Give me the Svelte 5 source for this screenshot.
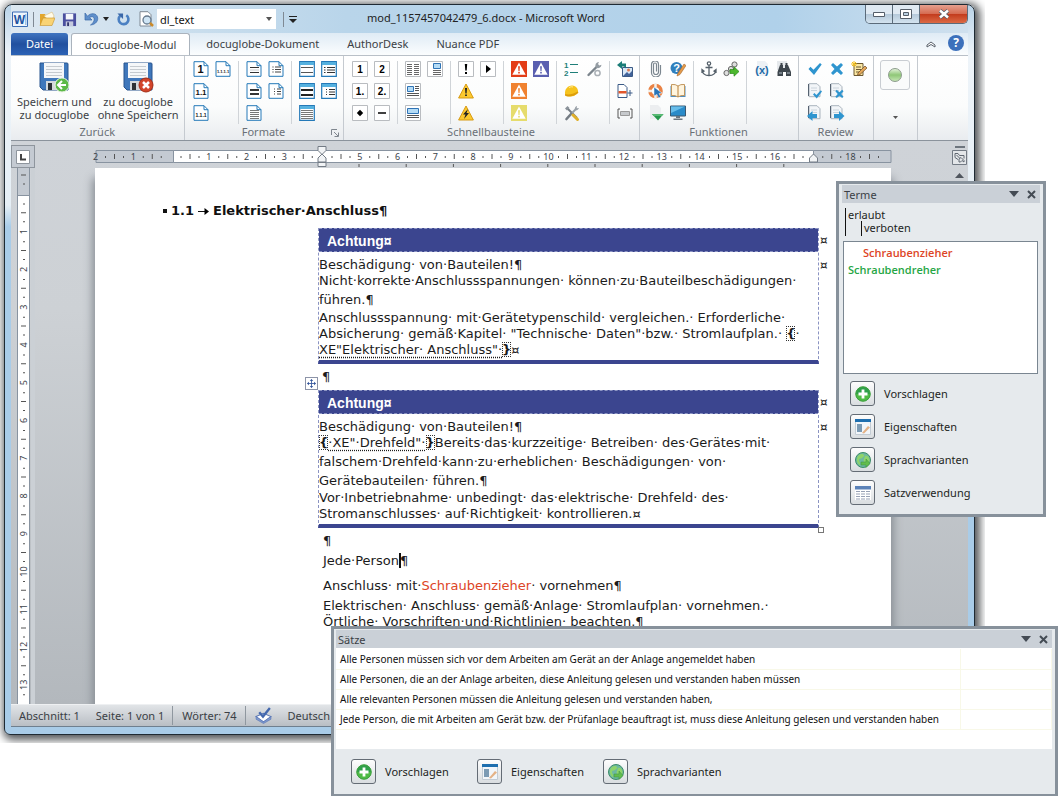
<script lang="ts">
    type Action = { icon: string; label: string };
    type Group = { name: string; blocks: string[][] };

    const numDoc = (text: string, x: number, size: number) =>
        `<path d="M1 .7h10l4 4v10.6H1z" fill="#fff" stroke="#2479b8"/><path d="M11 .7v4h4" fill="none" stroke="#2479b8"/><text x="${x}" y="12" font-size="${size}" font-weight="700" fill="#111" text-anchor="middle">${text}</text>`;
    const page = (body: string) =>
        `<path d="M1 .7h10l4 4v10.6H1z" fill="#fff" stroke="#2479b8"/><path d="M11 .7v4h4" fill="none" stroke="#2479b8"/>${body}`;
    const table = (body: string) =>
        `<path d="M.7.7h14.6v14.6H.7z" fill="#fff" stroke="#2479b8" stroke-width="1.2"/><path d="M1 1h14v3H1z" fill="#55b1df"/>${body}`;
    const box = (body: string) =>
        `<path d="M.5.5h15v15H.5z" fill="#fff" stroke="#b9bcc0"/>${body}`;
    const warn = (color: string) =>
        `<path d="M0 0h16v16H0z" fill="${color}"/><path d="M8 1.5l6.7 12.3H1.3z" fill="#fff"/><path d="M7.1 5.2h1.8l-.4 5h-1zM7.2 11h1.6v1.6H7.2z" fill="${color}"/>`;
    const triangle = (body: string) =>
        `<path d="M8 1l7.4 14H.6z" fill="#fcc92e" stroke="#d79a13" stroke-linejoin="round"/>${body}`;
    const sheet = '<path d="M2 .7h8l3 3v10H2z" fill="#f2f5f8" stroke="#a9b3bd"/><path d="M1.5 1v12" stroke="#566270"/><path d="M4 5h6M4 7.5h6" stroke="#cbd4dc"/>';
    const dots = '<path d="M4.5 6h1M4.5 8.5h1M4.5 11h1" stroke="#222"/><path d="M7 6h6M7 8.5h6M7 11h6" stroke="#444"/>';
    const check = 'M1.5 8l2-2.2 3 3L13 2l1.7 1.5L7 14z';
    const cross = 'M2 4l2-2 4 3.5L12 2l2 2-3.5 4 3.5 4-2 2-4-3.5L4 14l-2-2 3.5-4z';
    const spanner = '<path d="M2.5 14L11 5.5" stroke="#7c858d" stroke-width="2.4" stroke-linecap="round"/><path d="M10 6.5a3.5 3.5 0 0 1 3-5.5l-1 2 1.3 1.5 2.2-.8A3.5 3.5 0 0 1 10 6.5" fill="#959da4"/>';

    const icons: Record<string, string> = {
        h1: numDoc('1', 7.5, 11),
        h11: numDoc('1.1', 8, 8),
        h111: numDoc('1.1.1', 8, 5),
        h1111: numDoc('1.1.1.1', 8, 4),
        lines: page('<path d="M4 6.5h9M4 11.5h9" stroke="#333"/><path d="M4 9h9" stroke="#c7c9cc"/>'),
        bullets: page(dots),
        heavy: page('<path d="M4 7h9M4 11h9" stroke="#333" stroke-width="2"/>'),
        sub: page('<path d="M6 6h1M6 8.5h1M6 11h1M9 6h4M9 8.5h4M9 11h4" stroke="#444"/>'),
        para: page('<path d="M4 5.5h9M4 7.5h9M4 9.5h9M4 11.5h9M4 13.5h9" stroke="#777"/>'),
        tLines: table('<path d="M2 6.5h12M2 11.5h12" stroke="#555"/>'),
        tBullets: table('<path d="M3 6.5h1.5M3 9h1.5M3 11.5h1.5M6 6.5h8M6 9h8M6 11.5h8" stroke="#333"/>'),
        tHeavy: table('<path d="M2 7h12M2 12h12" stroke="#222" stroke-width="2"/>'),
        tSub: table('<path d="M5 6.5h1M5 9h1M5 11.5h1M8 6.5h6M8 9h6M8 11.5h6" stroke="#333"/>'),
        tPara: table('<path d="M2 5.5h12M2 7.5h12M2 9.5h12M2 11.5h12M2 13.5h12" stroke="#777"/>'),
        n1: box('<text x="8" y="11.5" font-size="10" font-weight="700" text-anchor="middle">1</text>'),
        n2: box('<text x="8" y="11.5" font-size="10" font-weight="700" text-anchor="middle">2</text>'),
        n1p: box('<text x="8" y="11.5" font-size="10" font-weight="700" text-anchor="middle">1.</text>'),
        n2p: box('<text x="8" y="11.5" font-size="10" font-weight="700" text-anchor="middle">2.</text>'),
        bullet: box('<path d="M8 4.8L11.2 8 8 11.2 4.8 8z"/>'),
        dash: box('<path d="M4 8h8" stroke="#111" stroke-width="1.6"/>'),
        columns: box('<path d="M2 3.5h5M2 5.5h5M2 7.5h5M2 9.5h5M2 11.5h5M2 13.5h5M9 3.5h5M9 5.5h5M9 7.5h5M9 9.5h5M9 11.5h5M9 13.5h5" stroke="#666"/>'),
        picRight: box('<path d="M6.5 2.5h7v5h-7z" fill="#b5dcf6" stroke="#2f73b5"/><path d="M6 9.5h8M6 11.5h8M6 13.5h8" stroke="#666"/>'),
        picLeft: box('<path d="M2.5 3.5h6v5h-6z" fill="#b5dcf6" stroke="#2f73b5"/><path d="M10 3.5h4M10 5.5h4M10 7.5h4M2 10.5h12M2 12.5h12" stroke="#555"/>'),
        picWide: box('<path d="M2.5 3.5h11v5h-11z" fill="#b5dcf6" stroke="#2f73b5"/><path d="M2 10.5h12M2 12.5h12" stroke="#555"/>'),
        exclaim: box('<path d="M6.8 3h2.4L8.7 9.5H7.3zM7 11h2v2H7z"/>'),
        play: box('<path d="M6 4l5 4-5 4z"/>'),
        caution: triangle('<path d="M7 5h2l-.4 5.5H7.4zM7.1 11.5h1.8V13H7.1z" fill="#222"/>'),
        voltage: triangle('<path d="M10 4L5 9.5h2.5L6 14l5-6H8.5z" fill="#222"/>'),
        red: warn('#e33d17'),
        blue: warn('#5a5fb0'),
        orange: warn('#f08230'),
        yellow: warn('#e6dc6c'),
        steps: '<path d="M6 3.5h8M6 11.5h8" stroke="#1f7f79" stroke-width="1.2"/><text x="0" y="7" font-size="8" font-weight="700" fill="#1f7f79">1</text><text x="0" y="15" font-size="8" font-weight="700" fill="#1f7f79">2</text>',
        wrench: spanner + '<circle cx="11.5" cy="12" r="2.6" fill="none" stroke="#aab0b6" stroke-width="1.5"/>',
        helmet: '<path d="M1 11C.5 6 4 2.5 8 2.5c4.5 0 6.5 4 6 7.5l-4 3c-4 1-8 .5-9-2z" fill="#f6c31d"/><path d="M1 11c3 1 8 .5 12.5-2.5l1 1C11 13 4 15 1 12.5z" fill="#dd9e0a"/><path d="M5 5c1-1.2 2.5-1.5 4-1" stroke="#ffeb9c" fill="none"/>',
        tools: '<path d="M3 3l10 10" stroke="#747c83" stroke-width="2"/><path d="M1 3.5L3.5 1l2 2L3 5.5z" fill="#8b939a"/><path d="M7.5 8.5L2.5 14" stroke="#747c83" stroke-width="2.6" stroke-linecap="round"/><path d="M8 8l4-4" stroke="#9aa2a9" stroke-width="2"/><path d="M11 5a3 3 0 0 1 2-4l-.3 2.3L15 3a3 3 0 0 1-4 2" fill="#9aa2a9"/><path d="M9 10l4.5 4.5" stroke="#e0b02a" stroke-width="3" stroke-linecap="round"/>',
        picBack: '<path d="M5.5 6.5h10v9h-10z" fill="#d9e8f6" stroke="#3b5a86"/><path d="M6 15l4-4 2 2 3-3v5z" fill="#42639a"/><circle cx="11.5" cy="9" r="1.5" fill="#e17a52"/><path d="M0 4l5-4v2.5h4v5L7 5.5H5V8z" fill="#1b7c77"/>',
        docPlus: '<path d="M1 1.5h6l3 3v10H1z" fill="#fff" stroke="#3b5a86"/><path d="M1.5 8h8v2.5h-8z" fill="#e2572b"/><path d="M13 7v6M10.5 10h5" stroke="#3b5a86"/>',
        bracket: '<path d="M3 4H1v9h2M13 4h2v9h-2" stroke="#555" fill="none"/><path d="M3.5 6.5h9v4h-9z" fill="#c6c9cc" stroke="#999"/>',
        clip: '<path d="M10.5 4v7.5a2.5 2.5 0 0 1-5 0V4a1.5 1.5 0 0 1 3 0v7M12.5 4.5V12a4.5 4.5 0 0 1-9 0V4a3.5 3.5 0 0 1 7 0" transform="translate(0 -.5)" fill="none" stroke="#7c8790" stroke-width="1.2"/>',
        helpEdit: '<circle cx="6.5" cy="7" r="6" fill="#2f7fbd"/><text x="6.5" y="11" font-size="11" font-weight="700" fill="#fff" text-anchor="middle">?</text><path d="M7 15l1-3 6-9 2 1.5-6 9z" fill="#e49b4b" stroke="#a4642a" stroke-width=".6"/>',
        ring: '<circle cx="7.5" cy="8" r="5.5" fill="none" stroke="#e98244" stroke-width="3.6"/><path d="M7.5 .5v4M7.5 11.5v4M0 8h4" stroke="#f4efe9" stroke-width="2.5"/><path d="M6 4l8 6-3 .5 2 3.5-2.5 1L9 11.5 6 13z" fill="#2875b8" stroke="#fff" stroke-width=".5"/>',
        book: '<path d="M.5 3h15v11H.5z" fill="#4f8fc2"/><path d="M1.5 1.5q4-.5 6.5 1.5 2.5-2 6.5-1.5v11q-4-.5-6.5 1.5-2.5-2-6.5-1.5z" fill="#fff5df" stroke="#c2965c"/><path d="M8 3v11" stroke="#b77e39"/>',
        download: '<path d="M2 0h8l3 3v11H2z" fill="#eceef0"/><path d="M4 9h11.5L10 15.5z" fill="#25974b"/><path d="M4 9h11.5L14 11H5.5z" fill="#57b873"/>',
        screen: '<path d="M.5 1h15v10H.5z" fill="#2a8bc9" stroke="#3b5870"/><path d="M1 1.5h14L1 8z" fill="#67bdea"/><path d="M6 11h4v2H6zM3.5 13.5h9V15h-9z" fill="#6b7680"/>',
        anchor: '<circle cx="8" cy="2.5" r="1.7" fill="none" stroke="#55606a" stroke-width="1.2"/><path d="M8 4v10.5M4.5 6.5h7M1 9c.5 3.5 3 5.5 7 5.5s6.5-2 7-5.5M1 12V8.5l2.5 2M15 12V8.5l-2.5 2" fill="none" stroke="#55606a" stroke-width="1.3"/>',
        links: '<circle cx="11.5" cy="3.5" r="2.6" fill="#ddd" stroke="#666"/><circle cx="8" cy="8" r="2.6" fill="#ddd" stroke="#666"/><circle cx="3.5" cy="12" r="2.6" fill="#ddd" stroke="#666"/><path d="M7 8.5h4V5.8l5 4.7-5 4.7v-2.7H7z" fill="#4db82e" stroke="#2c8a1b" stroke-width=".7"/>',
        variable: '<path d="M3 0h8l3 3v12H3z" fill="#edf1f5"/><text x="8" y="12.5" font-size="11" font-weight="700" fill="#1d6ba8" text-anchor="middle">(x)</text>',
        binoculars: '<path d="M1 0h10v9H1z" fill="#e6e9ec"/><path d="M4 4h3v3h2V4h3l3 7v4h-5v-4H7v4H1.5v-4z" fill="#3e464d"/><path d="M4.5 3h2M9.5 3h2" stroke="#3e464d" stroke-width="2"/><path d="M3 12h3M11 12h3" stroke="#8b959d" stroke-width="1.5"/>',
        accept: `<path d="${check}" fill="#2f95cf"/>`,
        reject: `<path d="${cross}" fill="#2f95cf"/>`,
        note: '<path d="M3 2.5h9v12H3z" fill="#fbe7a3" stroke="#6d5a33"/><path d="M5 6h5M5 8.5h5M5 11h4" stroke="#6d5a33"/><path d="M7 12l7-7 2 2-7 6.5-2.5.8z" fill="#e6a95a" stroke="#6a4723" stroke-width=".7"/><path d="M0 3h6M3 0v6M1 1l4 4M5 1L1 5" stroke="#f4c020"/>',
        docAccept: `${sheet}<path d="${check}" transform="translate(5 6) scale(.68)" fill="#2f95cf"/>`,
        docReject: `${sheet}<path d="${cross}" transform="translate(5 5.5) scale(.68)" fill="#2f95cf"/>`,
        docPrev: `${sheet}<path d="M0 11L5.500 6v3H10v4H5.500v3z" fill="#2f95cf"/>`,
        docNext: `${sheet}<path d="M15.500 11L10 6v3H5v4h5v3z" fill="#2f95cf"/>`,
        word: '<path d="M.5 1h15v14.5H.5z" fill="#eef5fc" stroke="#3b6db5"/><path d="M13 3h1.5v11H13z" fill="#9ec1e6"/><text x="7.5" y="12.5" font-size="12" font-weight="700" fill="#1d53a0" text-anchor="middle">W</text>',
        open: '<path d="M1 14V3h5l1 2h6v9z" fill="#e2a62c"/><path d="M5 5l8-4 2 4-3 6z" fill="#fffbe8" stroke="#d4b164" stroke-width=".5"/><path d="M1 14.5L4 7h12l-3 7.5z" fill="#f9d374" stroke="#c6922a" stroke-width=".6"/>',
        save: '<path d="M1 1.5h14v13.5H1z" fill="#4a4f9f"/><path d="M4 2h8v6H4z" fill="#f4f6fb"/><path d="M4 10h8v5H4z" fill="#c4c9de"/><path d="M5.5 11h2v4h-2z" fill="#33386f"/>',
        undo: '<path d="M1 2v7h7L5.7 6.7C8 4.5 11 6 10 9.5 9.500 11.500 8 13 6.500 14c5.500-.5 8-4.500 7-8-1.200-4-6.500-4.500-10-.8z" fill="#5f8fcb" stroke="#3a67a8" stroke-width=".7"/>',
        redo: '<path d="M11 3.5A5.2 5.2 0 1 1 4.5 4" fill="none" stroke="#4b80c2" stroke-width="2.8"/><path d="M1.5 1.5h6v6z" fill="#3a67a8"/>',
        preview: '<path d="M2 .7h8l3 3V15H2z" fill="#fff" stroke="#7e8893"/><circle cx="9" cy="9" r="4" fill="#cfe5f5" stroke="#64788c" stroke-width="1.3"/><path d="M12 12l3 3" stroke="#c98a2c" stroke-width="2.5"/>',
        plus: '<circle cx="8" cy="8" r="7.5" fill="#4fbb45"/><path d="M1 8a7 7 0 0 1 14 0z" fill="#2fa04a"/><circle cx="8" cy="8" r="7.2" fill="none" stroke="#3f9f43"/><path d="M8 3.5v9M3.5 8h9" stroke="#fff" stroke-width="2.8"/>',
        props: '<path d="M.5.5h15v15H.5z" fill="#f2f6fa" stroke="#c3ccd4"/><path d="M0 0h16v3H0z" fill="#1f6faf"/><path d="M2 5h5v8H2z" fill="#7c9bb4"/><path d="M7 14l6-7 2 1.5-6 6z" fill="#e4b286"/>',
        globe: '<circle cx="8" cy="8" r="7.5" fill="#6db8a0" stroke="#3c8c68"/><path d="M3 4c3-3 5-2 6-1s-1 2-2 3-3 0-3 2 2 3 1 5C2 12 1 7 3 4zM10 4c2-1 4 1 4.5 3.5S13 13 11 13s-1-2-2-3 0-3 1-6z" fill="#8ed46b"/><path d="M6 10h5V7l4 4.5-4 4V13H6z" fill="#62bd4d" stroke="#3d9340" stroke-width=".5"/>',
        grid: '<path d="M0 1h16v14H0z" fill="#fff"/><path d="M0 1h16v3.5H0z" fill="#5b82b8"/><path d="M1 6.5h4M6 6.5h4M11 6.5h4M1 9h4M6 9h4M11 9h4M1 11.5h4M6 11.5h4M11 11.5h4M1 14h4M6 14h4M11 14h4" stroke="#98a2b5"/>',
        spell: '<path d="M1 9l7-3 7 3-7 5z" fill="#fff" stroke="#5b78b5"/><path d="M1 9v2.5l7 4 7-4V9l-7 5z" fill="#7f9ad0" stroke="#5b78b5" stroke-width=".6"/><path d="M4 5l3.5 4L14 1" fill="none" stroke="#4468ae" stroke-width="2.2"/>',
        move: '<path d="M8 1v14M1 8h14" stroke="#35569c" stroke-width="1.5"/><path d="M8 0l3 3.5H5zM8 16l3-3.5H5zM0 8l3.5-3v6zM16 8l-3.5-3v6z" fill="#35569c"/>'
    };

    // blank strings keep a slot of the three row grid free
    const groups: Group[] = [
        {
            name: 'Formate',
            blocks: [
                ['h1', 'h1111', 'h11', '', 'h111', ''],
                ['lines', 'bullets', 'heavy', 'sub', 'para', ''],
                ['tLines', 'tBullets', 'tHeavy', 'tSub', 'tPara', '']
            ]
        },
        {
            name: 'Schnellbausteine',
            blocks: [
                ['n1', 'n2', 'n1p', 'n2p', 'bullet', 'dash'],
                ['columns', 'picRight', 'picLeft', '', 'picWide', ''],
                ['exclaim', 'play', 'caution', '', 'voltage', ''],
                ['red', 'blue', 'orange', '', 'yellow', ''],
                ['steps', 'wrench', 'helmet', '', 'tools', ''],
                ['picBack', 'docPlus', 'bracket']
            ]
        },
        {
            name: 'Funktionen',
            blocks: [
                ['clip', 'helpEdit', 'ring', 'book', 'download', 'screen'],
                ['anchor', 'links', '', '', '', ''],
                ['variable', 'binoculars', '', '', '', '']
            ]
        },
        {
            name: 'Review',
            blocks: [['accept', 'reject', 'note', 'docAccept', 'docReject', '', 'docPrev', 'docNext', '']]
        }
    ];

    const columnsOf = (block: string[]) => block.length / 3;

    const termActions: Action[] = [
        { icon: 'plus', label: 'Vorschlagen' },
        { icon: 'props', label: 'Eigenschaften' },
        { icon: 'globe', label: 'Sprachvarianten' },
        { icon: 'grid', label: 'Satzverwendung' }
    ];
    const sentenceActions = termActions.slice(0, 3);

    const sentences = [
        'Alle Personen müssen sich vor dem Arbeiten am Gerät an der Anlage angemeldet haben',
        'Alle Personen, die an der Anlage arbeiten, diese Anleitung gelesen und verstanden haben müssen',
        'Alle relevanten Personen müssen die Anleitung gelesen und verstanden haben,',
        'Jede Person, die mit Arbeiten am Gerät bzw. der Prüfanlage beauftragt ist, muss diese Anleitung gelesen und verstanden haben'
    ];

    // ruler units are centimetres, one of them is 37.75px on screen
    const unit = 37.75;
    const range = (from: number, to: number) => Array.from({ length: to - from + 1 }, (_, i) => from + i);
    const ruler = range(-2, 18);
    const sideRuler = range(0, 13);
    const tabStops = range(0, 9);

    let template = $state('dl_text');
</script>

{#snippet icon(name: string, size = 16)}
    <svg class="icon" width={size} height={size} viewBox="0 0 16 16" aria-hidden="true">{@html icons[name]}</svg>
{/snippet}

{#snippet action(item: Action)}
    <button class="action">
        <span class="action__icon">{@render icon(item.icon)}</span>
        {item.label}
    </button>
{/snippet}

{#snippet paneHead(title: string)}
    <header class="pane__head">
        <h2>{title}</h2>
        <button aria-label="Menü"><svg width="10" height="6" viewBox="0 0 10 6"><path d="M0 0h10L5 6z" fill="#444b54" /></svg></button>
        <button aria-label="Schließen"><svg width="9" height="9" viewBox="0 0 9 9"><path d="M1 1l7 7M8 1L1 8" stroke="#444b54" stroke-width="2" /></svg></button>
    </header>
{/snippet}

{#snippet disk(kind: string)}
    <svg width="32" height="32" viewBox="0 0 32 32" aria-hidden="true">
        <path d="M2 2h27q1 0 1 1v26H5l-3-3z" fill="#3f77bb" stroke="#29548e" />
        <path d="M6 2h20v15H6z" fill="#f5f7f9" />
        <path d="M8 5.5h16M8 8.5h16M8 11.5h16M8 14.5h16" stroke="#c6cbd0" />
        <path d="M8 20h15v9H8z" fill="#d4d8dc" />
        <path d="M10 22h4v7h-4z" fill="#2d3136" />
        {#if kind === 'back'}
            <circle cx="24" cy="24" r="7" fill="#5cb947" stroke="#e9f3e4" />
            <path d="M28 24h-7M24 20l-4 4 4 4" fill="none" stroke="#fff" stroke-width="2" />
        {:else}
            <circle cx="24" cy="24" r="7" fill="#d2452a" stroke="#a52d16" />
            <path d="M21 21l6 6M27 21l-6 6" stroke="#fff" stroke-width="2.5" />
        {/if}
    </svg>
{/snippet}

<main class="stage">
    <div class="shade">
        <div class="window">
            <header class="title">
                <div class="quick">
                    {@render icon('word')}
                    <i class="bar"></i>
                    <button aria-label="Öffnen">{@render icon('open')}</button>
                    <button aria-label="Speichern">{@render icon('save', 15)}</button>
                    <button class="undo" aria-label="Rückgängig">
                        {@render icon('undo')}
                        <svg width="6" height="4" viewBox="0 0 6 4"><path d="M0 0h6L3 4z" fill="#222" /></svg>
                    </button>
                    <button aria-label="Wiederholen">{@render icon('redo', 15)}</button>
                    <button aria-label="Vorschau">{@render icon('preview')}</button>
                    <span class="combo">
                        <select aria-label="Formatvorlage" bind:value={template}>
                            <option>dl_text</option>
                        </select>
                        <svg width="6" height="4" viewBox="0 0 6 4"><path d="M0 0h6L3 4z" fill="#555" /></svg>
                    </span>
                    <i class="bar"></i>
                    <button aria-label="Anpassen">
                        <svg width="8" height="7" viewBox="0 0 8 7"><path d="M0 .5h8" stroke="#222" /><path d="M0 3h8L4 7z" fill="#222" /></svg>
                    </button>
                </div>
                <h1>mod_1157457042479_6.docx - Microsoft Word</h1>
                <div class="controls">
                    <button aria-label="Minimieren"><svg width="12" height="5" viewBox="0 0 12 5"><path d="M.5.5h11v4H.5z" fill="#fff" stroke="#555e69" /></svg></button>
                    <button aria-label="Maximieren"><svg width="12" height="10" viewBox="0 0 12 10"><path d="M.5.5h11v9H.5z" fill="#fff" stroke="#555e69" /><path d="M3.5 3.5h5v3h-5z" fill="#b9cfe0" stroke="#555e69" /></svg></button>
                    <button class="close" aria-label="Fenster schließen"><svg width="12" height="10" viewBox="0 0 12 10"><path d="M2 1.5l8 7M10 1.5l-8 7" stroke="#555e69" stroke-width="4" /><path d="M2 1.5l8 7M10 1.5l-8 7" stroke="#fff" stroke-width="2.5" /></svg></button>
                </div>
            </header>

            <nav class="tabs">
                <button class="tab tab--file">Datei</button>
                <button class="tab is-active">docuglobe-Modul</button>
                <button class="tab">docuglobe-Dokument</button>
                <button class="tab">AuthorDesk</button>
                <button class="tab">Nuance PDF</button>
                <button class="collapse" aria-label="Menüband minimieren"><svg width="10" height="7" viewBox="0 0 10 7"><path d="M1 4l4-3 4 3v2L5 3.5 1 6z" fill="#fff" stroke="#59616b" /></svg></button>
                <button class="help" aria-label="Hilfe">?</button>
            </nav>

            <section class="ribbon">
                <div class="group">
                    <div class="group__body group__body--large">
                        <button class="large">{@render disk('back')}<span>Speichern und<br />zu docuglobe</span></button>
                        <button class="large">{@render disk('drop')}<span>zu docuglobe<br />ohne Speichern</span></button>
                    </div>
                    <div class="group__name">Zurück</div>
                </div>
                {#each groups as group}
                    <div class="group">
                        <div class="group__body">
                            {#each group.blocks as block}
                                <div class="block" style="grid-template-columns: repeat({columnsOf(block)}, 16px)">
                                    {#each block as name}
                                        {#if name}
                                            <button aria-label={name}>{@render icon(name)}</button>
                                        {:else}
                                            <span></span>
                                        {/if}
                                    {/each}
                                </div>
                            {/each}
                        </div>
                        <div class="group__name">{group.name}</div>
                        {#if group.name === 'Formate'}
                            <svg class="launcher" width="8" height="8" viewBox="0 0 8 8"><path d="M.5 6V.5H6M3 3l4 4M7.5 3.5v4h-4" fill="none" stroke="#7f868e" /></svg>
                        {/if}
                    </div>
                {/each}
                <div class="group group--status">
                    <button class="orb" aria-label="Status"><i></i></button>
                    <svg width="5" height="3" viewBox="0 0 5 3"><path d="M0 0h5L2.5 3z" fill="#555" /></svg>
                </div>
            </section>

            <section class="work">
                <div class="side">
                    <div class="corner"><svg width="14" height="14" viewBox="0 0 14 14"><path d="M.5.5h13v13H.5z" fill="#fff" stroke="#8e959d" /><path d="M5 4v5.5h5" fill="none" stroke="#444" stroke-width="2" /></svg></div>
                    <svg class="ruler-v" width="13" height="536" viewBox="0 0 13 536">
                        <path d="M0 0h13v27H0z" fill="#c4cad2" />
                        <path d="M0 27h13v509H0z" fill="#fff" />
                        <path d="M.5 0v536M12.5 0v536M0 27.5h13" stroke="#8893a0" />
                        {#each sideRuler as n}
                            {@const y = 26 + n * unit}
                            {#if n > 0}<text x="6" y={y} transform="rotate(-90 6 {y})" dy="4">{n}</text>{/if}
                            <path d="M6 {y - 10}h2M6 {y + 10}h2M4 {y - 19}h5" stroke="#555" />
                        {/each}
                    </svg>
                </div>
                <div class="canvas">
                    <svg class="ruler-h" height="23" width="797">
                        <path d="M1 5.5h795v12H1z" fill="#c4cad2" stroke="#8893a0" />
                        <path d="M78.5 5.5h640v12h-640z" fill="#fff" stroke="#8893a0" />
                        {#each ruler as n}
                            {@const x = 76 + n * unit}
                            {#if n !== 0 && n !== 4 && n !== 17}<text {x} y="15">{Math.abs(n)}</text>{/if}
                            <path d="M{x + 10} 11v2M{x + 19} 9v5M{x + 28} 11v2" stroke="#555" />
                        {/each}
                        {#each tabStops as n}
                            <path d="M{264 + n * 47.2} 19v3" stroke="#555" />
                        {/each}
                        <path d="M223 1.5h8v4l-4 4-4-4zM227 9l4 4v4h-8v-4zM223 17.5h8v4h-8z" fill="#f2f4f6" stroke="#737b85" />
                        <path d="M718.5 9l4 4v4h-8v-4z" fill="#f2f4f6" stroke="#737b85" />
                    </svg>

                    <article class="page">
                        <h3><i></i>1.1<svg width="11" height="7" viewBox="0 0 11 7"><path d="M0 3.5h8" stroke="#111" /><path d="M6.5 0L11 3.5 6.5 7z" /></svg>Elektrischer·Anschluss¶</h3>

                        <div class="note">
                            <div class="note__box">
                                <div class="note__head">Achtung¤</div>
                                <div class="note__text">
                                    <p>Beschädigung· von·Bauteilen!¶</p>
                                    <p>Nicht·korrekte·Anschlussspannungen· können·zu·Bauteilbeschädigungen·</p>
                                    <p class="tall">führen.¶</p>
                                    <p>Anschlussspannung· mit·Gerätetypenschild· vergleichen.· Erforderliche·</p>
                                    <p>Absicherung· gemäß·Kapitel· "Technische· Daten"·bzw.· Stromlaufplan.· <b>{'{'}</b>·</p>
                                    <p><u>XE"Elektrischer· Anschluss"· </u><b>{'}'}</b>¤</p>
                                </div>
                            </div>
                            <div class="note__marks"><span>¤</span><span>¤</span></div>
                        </div>
                        <p class="mark">¶</p>
                        <div class="note">
                            <span class="handle">{@render icon('move', 9)}</span>
                            <div class="note__box">
                                <div class="note__head">Achtung¤</div>
                                <div class="note__text">
                                    <p>Beschädigung· von·Bauteilen!¶</p>
                                    <p><b>{'{'}</b><u>·XE"·Drehfeld"·</u><b>{'}'}</b>Bereits·das·kurzzeitige· Betreiben· des·Gerätes·mit·</p>
                                    <p class="tall">falschem·Drehfeld·kann·zu·erheblichen· Beschädigungen· von·</p>
                                    <p class="mid">Gerätebauteilen· führen.¶</p>
                                    <p>Vor·Inbetriebnahme· unbedingt· das·elektrische· Drehfeld· des·</p>
                                    <p>Stromanschlusses· auf·Richtigkeit· kontrollieren.¤</p>
                                </div>
                            </div>
                            <div class="note__marks"><span>¤</span><span>¤</span></div>
                            <i class="grip"></i>
                        </div>
                        <div class="after">
                            <p>¶</p>
                            <p class="gap-s">Jede·Person<span class="caret"></span>¶</p>
                            <p class="gap-l">Anschluss· mit·<em>Schraubenzieher</em>· vornehmen¶</p>
                            <p class="gap-s">Elektrischen· Anschluss· gemäß·Anlage· Stromlaufplan· vornehmen.·</p>
                            <p>Örtliche· Vorschriften·und·Richtlinien· beachten.¶</p>
                        </div>
                    </article>
                </div>
                <div class="scroll">
                    <i class="split"></i>
                    <svg width="15" height="15" viewBox="0 0 15 15"><path d="M.5.5h14v14H.5z" fill="#e3e6e9" stroke="#737b85" /><path d="M3 3.5h3l1.5 2H10M3 3.5v4l3 2M4.500 5l3 3M9 5.500h3v3M7 12v-3l2-1.500 3 3v1.500l-2-1.500-1.500 1.500z" fill="none" stroke="#5f6771" /></svg>
                    <svg width="9" height="5" viewBox="0 0 9 5"><path d="M0 5h9L4.5 0z" fill="#50565e" /></svg>
                </div>
            </section>

            <footer class="status">
                <span>Abschnitt: 1</span>
                <span>Seite: 1 von 1</span>
                <i></i>
                <span>Wörter: 74</span>
                <i></i>
                {@render icon('spell', 17)}
                <span>Deutsch</span>
            </footer>
        </div>
    </div>

    <aside class="pane pane--terms">
        {@render paneHead('Terme')}
        <div class="legend">
            <span>erlaubt</span>
            <span>verboten</span>
        </div>
        <ul class="terms">
            <li class="denied">Schraubenzieher</li>
            <li class="allowed">Schraubendreher</li>
        </ul>
        <div class="stack">
            {#each termActions as item}
                {@render action(item)}
            {/each}
        </div>
    </aside>

    <aside class="pane pane--sentences">
        {@render paneHead('Sätze')}
        <div class="sheet">
            <table>
                <tbody>
                    {#each sentences as sentence}
                        <tr><td>{sentence}</td><td></td></tr>
                    {/each}
                </tbody>
            </table>
        </div>
        <div class="row">
            {#each sentenceActions as item}
                {@render action(item)}
            {/each}
        </div>
    </aside>
</main>

<style>
    :global(body) {
        margin: 0;
        background: #fff;
    }

    .stage {
        position: relative;
        overflow: hidden;
        min-height: 796px;
        font-family: "Noto Sans", "Open Sans", sans-serif;
        font-size: 11px;
        color: #3b3f45;
    }

    .stage :global(*) {
        box-sizing: border-box;
    }

    h1, h2, h3, p, ul {
        margin: 0;
        padding: 0;
        font-weight: 400;
    }

    button {
        padding: 0;
        border: 0;
        background: none;
        font: inherit;
        color: inherit;
        cursor: pointer;
    }

    svg {
        display: block;
        flex: none;
    }

    .icon {
        font-family: "Liberation Sans", sans-serif;
    }

    .shade {
        overflow: hidden;
        margin-right: 73px;
        padding: 4px 10px 8px 4px;
    }

    .window {
        padding: 0 6px 7px;
        border: 1px solid #1f2a33;
        border-radius: 8px 8px 6px 6px;
        background: linear-gradient(#b9d3e8, #eef4f9 50px, #e6eff6 200px, #a9cce8 222px, #a9cce8);
        box-shadow: 2px 2px 8px 3px #55585b;
    }

    .title {
        display: flex;
        height: 28px;
        background: linear-gradient(90deg, #dde8f1, #b9d5ea 35%, #b0d1ea 80%, #cfe0ee);
    }

    .title h1 {
        flex: 1;
        padding-left: 70px;
        font-size: 11px;
        line-height: 26px;
        color: #222;
        white-space: nowrap;
    }

    .quick {
        display: flex;
        align-items: center;
        gap: 7px;
        padding-left: 1px;
    }

    .quick .bar {
        width: 1px;
        height: 15px;
        margin: 0 -2px;
        background: #7f8994;
    }

    .undo {
        display: flex;
        align-items: center;
        gap: 3px;
    }

    .combo {
        position: relative;
        margin: 0 2px 0 -4px;
    }

    .combo select {
        display: block;
        width: 119px;
        height: 20px;
        padding: 0 3px;
        border: 0;
        appearance: none;
        background: #fff;
        font: inherit;
        color: #111;
    }

    .combo svg {
        position: absolute;
        top: 8px;
        right: 4px;
    }

    .controls {
        display: flex;
        height: 19px;
        border: 1px solid #5b6b7a;
        border-top: 0;
        border-radius: 0 0 5px 5px;
        overflow: hidden;
    }

    .controls button {
        display: grid;
        place-items: center;
        width: 27px;
        border-right: 1px solid #5b6b7a;
        background: linear-gradient(#dfe9f2 50%, #b4c8d9 50%, #d3e3ef);
    }

    .controls .close {
        width: 47px;
        border-right: 0;
        background: linear-gradient(#e5a08f, #d56a50 50%, #c23a1c 50%, #dc6a45);
    }

    .tabs {
        display: flex;
        height: 22px;
        font-size: 11px;
        background: linear-gradient(#dfebf5, #fbfdfe);
    }

    .tab {
        padding: 0 14px;
        line-height: 22px;
        white-space: nowrap;
    }

    .tab--file {
        width: 57px;
        margin-right: 3px;
        border-radius: 3px 3px 0 0;
        background: linear-gradient(#3f74c0, #21509f 50%, #2c62b5);
        color: #fff;
    }

    .tab.is-active {
        margin-right: 2px;
        padding: 0 13px;
        border: 1px solid #aab3bd;
        border-bottom: 0;
        border-radius: 3px 3px 0 0;
        background: #fff;
    }

    .collapse {
        margin: 0 8px 0 auto;
    }

    .help {
        width: 16px;
        height: 16px;
        margin: 2px 4px;
        border-radius: 50%;
        background: #3c70bb;
        color: #fff;
        font-size: 12px;
        font-weight: 700;
        line-height: 16px;
    }

    .ribbon {
        display: flex;
        height: 86px;
        border-top: 1px solid #b9c0c8;
        border-bottom: 1px solid #8b939c;
        background: linear-gradient(#fff, #fbfcfc 60%, #e9ecef);
    }

    .group {
        position: relative;
        display: flex;
        flex-direction: column;
        border-right: 1px solid #c5cad0;
    }

    .group__body {
        display: flex;
        flex: 1;
        padding: 5px 6px 0 8px;
    }

    .group__body--large {
        gap: 6px;
        padding: 5px 5px 0 6px;
    }

    .group__name {
        height: 16px;
        font-size: 11px;
        line-height: 16px;
        text-align: center;
        color: #6a7077;
    }

    .large {
        display: flex;
        flex-direction: column;
        align-items: center;
        gap: 2px;
        line-height: 13px;
        white-space: nowrap;
    }

    .block {
        display: grid;
        grid-auto-rows: 16px;
        gap: 6px;
        align-content: start;
    }

    .block + .block {
        margin-left: 7px;
        padding-left: 7px;
        border-left: 1px solid #d0d4d8;
    }

    .launcher {
        position: absolute;
        right: 4px;
        bottom: 3px;
    }

    .group--status {
        align-items: center;
        gap: 26px;
        width: 44px;
        padding-top: 4px;
    }

    .orb {
        display: grid;
        place-items: center;
        width: 30px;
        height: 30px;
        border: 1px solid #c9cdd2;
        border-radius: 3px;
        background: #fafbfb;
    }

    .orb i {
        width: 14px;
        height: 14px;
        border: 1px solid #8c9b8b;
        border-radius: 50%;
        background: linear-gradient(#e1f1d8, #8fc777 50%, #c4e5b3);
    }

    .work {
        display: flex;
        padding-top: 4px;
        background: linear-gradient(#cfd3d8, #cdd1d5 30%, #b3b8bd);
    }

    .side {
        flex: none;
        width: 24px;
        border-right: 4px solid #cbd0d5;
    }

    .corner {
        display: grid;
        place-items: center;
        width: 24px;
        height: 23px;
        border: 1px solid #8e959d;
        background: #c4cad2;
    }

    .ruler-v {
        margin-left: 6px;
    }

    .ruler-h text,
    .ruler-v text {
        font-size: 9px;
        fill: #3d444c;
        text-anchor: middle;
    }

    .canvas {
        flex: 1;
        min-width: 0;
        overflow: hidden;
        padding: 0 60px;
    }

    .ruler-h {
        overflow: visible;
    }

    .page {
        height: 536px;
        padding: 33px 62px 0 68px;
        background: #fff;
        box-shadow: 0 12px 9px 2px #82888f;
        font-family: "DejaVu Sans", sans-serif;
        font-size: 13px;
        line-height: 16px;
        color: #1b1b1b;
    }

    .page p {
        white-space: pre;
    }

    .page h3 {
        display: flex;
        align-items: center;
        gap: 4px;
        height: 20px;
        margin-bottom: 7px;
        font-size: 13px;
        font-weight: 700;
        color: #111;
    }

    .page h3 i {
        width: 4px;
        height: 4px;
        background: #111;
    }

    .note {
        position: relative;
        display: flex;
        margin-left: 155px;
    }

    .note__box {
        flex: 1;
        min-width: 0;
        border: 1px dashed #8b93c2;
        border-top: 0;
        border-bottom: 4px solid #3b458f;
    }

    .note__head {
        height: 24px;
        padding-left: 8px;
        border-top: 1px dashed #8b93c2;
        border-bottom: 1px dashed #8b93c2;
        background: #3b458f;
        color: #fff;
        font-family: "Liberation Sans", sans-serif;
        font-size: 14px;
        font-weight: 700;
        line-height: 24px;
    }

    .note__text {
        padding: 5px 0 2px;
    }

    .note__marks {
        width: 10px;
        padding-left: 1px;
        font-size: 12px;
    }

    .note__marks span {
        display: block;
        height: 25px;
        line-height: 25px;
    }

    .tall {
        line-height: 21px;
    }

    .mid {
        line-height: 18px;
    }

    .page b {
        outline: 1px dotted #333;
        outline-offset: -1px;
    }

    .page u {
        text-decoration: underline dotted;
        text-underline-offset: 3px;
    }

    .mark {
        margin-left: 159px;
        line-height: 26px;
    }

    .handle {
        position: absolute;
        top: -13px;
        left: -13px;
        padding: 1px;
        border: 1px solid #8d94a8;
        background: #fff;
    }

    .grip {
        position: absolute;
        right: 5px;
        bottom: -5px;
        width: 6px;
        height: 6px;
        border: 1px solid #777;
        background: #fff;
    }

    .after {
        margin-left: 160px;
        padding-top: 5px;
    }

    .gap-s {
        margin-top: 4px;
    }

    .gap-l {
        margin-top: 9px;
    }

    .caret {
        border-left: 2px solid #111;
        margin-right: -1px;
    }

    em {
        font-style: normal;
        color: #dd4526;
    }

    .scroll {
        display: flex;
        flex-direction: column;
        align-items: center;
        gap: 2px;
        width: 17px;
    }

    .split {
        width: 10px;
        height: 2px;
        margin-top: 1px;
        background: #6d757e;
    }

    .scroll svg + svg {
        margin-top: 6px;
    }

    .status {
        display: flex;
        align-items: center;
        height: 23px;
        padding-left: 8px;
        border-top: 1px solid #eef0f2;
        border-bottom: 1px solid #6f7f8e;
        background: linear-gradient(#e1e4e7, #b9bec4);
        white-space: nowrap;
    }

    .status span {
        margin-right: 16px;
    }

    .status i {
        width: 1px;
        height: 19px;
        margin: 0 9px 0 -8px;
        background: #8f979f;
    }

    .status .icon {
        margin-right: 16px;
    }

    .pane {
        position: absolute;
        border: 3px solid #87919b;
        background: #e6eaed;
        color: #1d1f22;
    }

    .pane__head {
        display: flex;
        align-items: center;
        gap: 8px;
        height: 18px;
        padding: 0 4px 0 2px;
        background: #cad0d7;
    }

    .pane__head h2 {
        flex: 1;
        font-size: 11px;
        color: #3b3f45;
    }

    .pane--terms {
        top: 181px;
        right: 12px;
        width: 210px;
        padding: 1px 3px 9px;
    }

    .legend {
        display: flex;
        height: 28px;
        margin: 5px 0 5px 3px;
        line-height: 14px;
        font-size: 11px;
    }

    .legend span {
        width: 16px;
        padding-left: 2px;
        border-left: 1px solid #111;
    }

    .legend span + span {
        margin-top: 13px;
    }

    .terms {
        height: 133px;
        margin: 0 2px 7px 1px;
        padding: 2px 4px;
        border: 1px solid #7a8691;
        background: #fff;
        list-style: none;
        font-family: "Open Sans", sans-serif;
        font-weight: 600;
        font-size: 11px;
        line-height: 17px;
    }

    .denied {
        padding-left: 15px;
        color: #dd4526;
    }

    .allowed {
        color: #26a645;
    }

    .stack {
        display: flex;
        flex-direction: column;
        gap: 8px;
        padding-left: 8px;
    }

    .action {
        display: flex;
        align-items: center;
        gap: 9px;
        white-space: nowrap;
    }

    .action__icon {
        display: grid;
        place-items: center;
        width: 25px;
        height: 25px;
        border: 1px solid #646c75;
        border-radius: 3px;
        background: linear-gradient(#fdfdfd, #d9dde0);
    }

    .pane--sentences {
        top: 626px;
        left: 331px;
        right: 0;
        padding: 1px 3px 10px 2px;
    }

    .sheet {
        height: 101px;
        padding-top: 1px;
        background: #fff;
    }

    .sheet table {
        width: 100%;
        border-collapse: collapse;
        font-size: 10px;
        color: #111;
    }

    .sheet td {
        height: 20px;
        padding: 0 4px;
        border: 0 solid #f8f8e8;
        border-width: 0 1px 1px 0;
        white-space: nowrap;
    }

    .sheet td:first-child {
        width: 624px;
    }

    .row {
        display: grid;
        grid-template-columns: repeat(3, 126px);
        padding: 10px 15px 0;
    }
</style>
